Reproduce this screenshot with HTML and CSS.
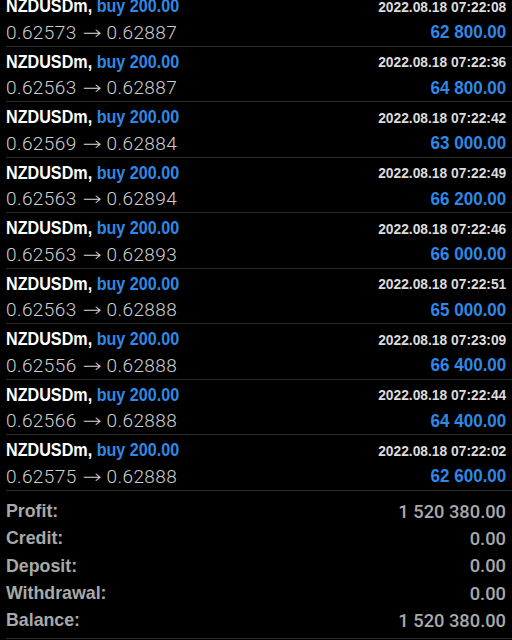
FILE: index.html
```html
<!DOCTYPE html>
<html>
<head>
<meta charset="utf-8">
<link rel="stylesheet" href="styles.css">
</head>
<body>
<div class="screen">
  <div class="list">
    <div class="row">
      <div class="line"><span class="title">NZDUSDm, <span class="blue">buy 200.00</span></span><span class="date">2022.08.18 07:22:08</span></div>
      <div class="line"><span class="price">0.62573 <span class="arrow">→</span> 0.62887</span><span class="amount">62 800.00</span></div>
    </div>
    <div class="row">
      <div class="line"><span class="title">NZDUSDm, <span class="blue">buy 200.00</span></span><span class="date">2022.08.18 07:22:36</span></div>
      <div class="line"><span class="price">0.62563 <span class="arrow">→</span> 0.62887</span><span class="amount">64 800.00</span></div>
    </div>
    <div class="row">
      <div class="line"><span class="title">NZDUSDm, <span class="blue">buy 200.00</span></span><span class="date">2022.08.18 07:22:42</span></div>
      <div class="line"><span class="price">0.62569 <span class="arrow">→</span> 0.62884</span><span class="amount">63 000.00</span></div>
    </div>
    <div class="row">
      <div class="line"><span class="title">NZDUSDm, <span class="blue">buy 200.00</span></span><span class="date">2022.08.18 07:22:49</span></div>
      <div class="line"><span class="price">0.62563 <span class="arrow">→</span> 0.62894</span><span class="amount">66 200.00</span></div>
    </div>
    <div class="row">
      <div class="line"><span class="title">NZDUSDm, <span class="blue">buy 200.00</span></span><span class="date">2022.08.18 07:22:46</span></div>
      <div class="line"><span class="price">0.62563 <span class="arrow">→</span> 0.62893</span><span class="amount">66 000.00</span></div>
    </div>
    <div class="row">
      <div class="line"><span class="title">NZDUSDm, <span class="blue">buy 200.00</span></span><span class="date">2022.08.18 07:22:51</span></div>
      <div class="line"><span class="price">0.62563 <span class="arrow">→</span> 0.62888</span><span class="amount">65 000.00</span></div>
    </div>
    <div class="row">
      <div class="line"><span class="title">NZDUSDm, <span class="blue">buy 200.00</span></span><span class="date">2022.08.18 07:23:09</span></div>
      <div class="line"><span class="price">0.62556 <span class="arrow">→</span> 0.62888</span><span class="amount">66 400.00</span></div>
    </div>
    <div class="row">
      <div class="line"><span class="title">NZDUSDm, <span class="blue">buy 200.00</span></span><span class="date">2022.08.18 07:22:44</span></div>
      <div class="line"><span class="price">0.62566 <span class="arrow">→</span> 0.62888</span><span class="amount">64 400.00</span></div>
    </div>
    <div class="row">
      <div class="line"><span class="title">NZDUSDm, <span class="blue">buy 200.00</span></span><span class="date">2022.08.18 07:22:02</span></div>
      <div class="line"><span class="price">0.62575 <span class="arrow">→</span> 0.62888</span><span class="amount">62 600.00</span></div>
    </div>
  </div>
  <div class="summary">
    <div class="srow"><span class="label">Profit:</span><span class="value">1 520 380.00</span></div>
    <div class="srow"><span class="label">Credit:</span><span class="value">0.00</span></div>
    <div class="srow"><span class="label">Deposit:</span><span class="value">0.00</span></div>
    <div class="srow"><span class="label">Withdrawal:</span><span class="value">0.00</span></div>
    <div class="srow"><span class="label">Balance:</span><span class="value">1 520 380.00</span></div>
  </div>
</div>
</body>
</html>
```

FILE: styles.css
```css
html, body {
  margin: 0;
  padding: 0;
  background: #000;
}
.screen {
  width: 512px;
  height: 640px;
  overflow: hidden;
  background: #000;
  font-family: "Liberation Sans", Arial, sans-serif;
}
.list {
  margin-top: -9px;
}
.row {
  margin-left: 6px;
  padding-right: 6px;
  height: 52.5px;
  padding-top: 2px;
  border-bottom: 1px solid #2b2b2b;
}
.line {
  display: flex;
  justify-content: space-between;
  align-items: center;
  height: 26px;
  white-space: nowrap;
}
.title {
  display: inline-block;
  color: #fff;
  font-weight: bold;
  font-size: 19px;
  transform: scaleX(0.85);
  transform-origin: left center;
}
.blue {
  color: #2f88e6;
}
.date {
  display: inline-block;
  color: #dcdcdc;
  font-weight: bold;
  font-size: 15px;
  transform: scaleX(0.92);
  transform-origin: right center;
}
.price {
  color: #cfcfcf;
  font-family: Roboto, "Liberation Sans", sans-serif;
  font-weight: 300;
  font-size: 19px;
  letter-spacing: 0.4px;
}
.arrow {
  display: inline-block;
  margin: 0 2px;
  font-family: "DejaVu Sans", sans-serif;
  font-weight: 200;
  font-size: 19px;
  letter-spacing: 0;
  transform: scaleX(1.2);
}
.amount {
  display: inline-block;
  color: #2f88e6;
  font-weight: bold;
  font-size: 18.5px;
  transform: scaleX(0.92);
  transform-origin: right center;
}
.summary {
  margin-left: 6px;
  padding-right: 6px;
  padding-top: 7px;
  padding-bottom: 4px;
  border-bottom: 1px solid #2b2b2b;
}
.srow {
  display: flex;
  justify-content: space-between;
  align-items: center;
  height: 27.3px;
  white-space: nowrap;
}
.label {
  display: inline-block;
  color: #a9a9a9;
  font-weight: bold;
  font-size: 18.5px;
  transform: scaleX(0.96);
  transform-origin: left center;
}
.value {
  color: #a9a9a9;
  font-family: Roboto, "Liberation Sans", sans-serif;
  font-weight: 500;
  font-size: 18.3px;
}
```
